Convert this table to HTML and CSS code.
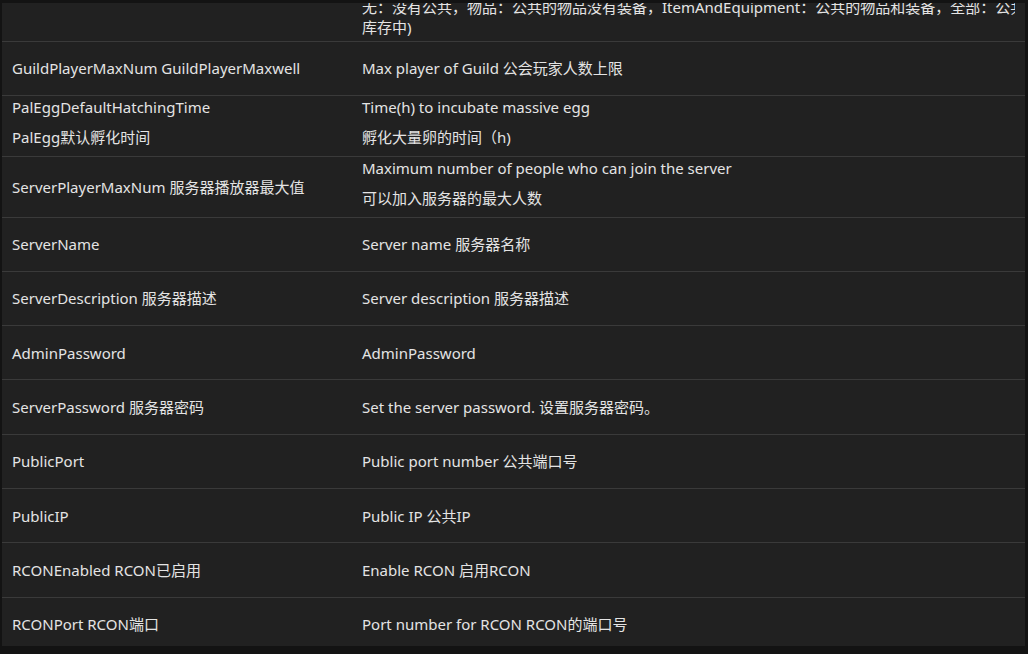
FILE: index.html
```html
<!DOCTYPE html>
<html lang="zh-CN">
<head>
  <meta charset="UTF-8" />
  <meta name="viewport" content="width=device-width, initial-scale=1.0" />
  <title>Palworld 服务器设置</title>
  <link rel="stylesheet" href="styles.css">
</head>
<body>
  <div class="viewport">
    <table class="settings">
      <colgroup>
        <col class="col-key" />
        <col class="col-desc" />
      </colgroup>
      <tbody>
        <tr class="row-cut">
          <td></td>
          <td>
            <div class="wrap-line">无：没有公共，物品：公共的物品没有装备，ItemAndEquipment：公共的物品和装备，全部：公共所有</div>
            <div class="wrap-line">库存中)</div>
          </td>
        </tr>
        <tr class="row-first">
          <td>GuildPlayerMaxNum GuildPlayerMaxwell</td>
          <td>Max player of Guild 公会玩家人数上限</td>
        </tr>
        <tr class="row-double">
          <td class="stack">
            <div class="line">PalEggDefaultHatchingTime</div>
            <div class="line">PalEgg默认孵化时间</div>
          </td>
          <td class="stack">
            <div class="line">Time(h) to incubate massive egg</div>
            <div class="line">孵化大量卵的时间（h)</div>
          </td>
        </tr>
        <tr class="row-double">
          <td>ServerPlayerMaxNum 服务器播放器最大值</td>
          <td class="stack">
            <div class="line">Maximum number of people who can join the server</div>
            <div class="line">可以加入服务器的最大人数</div>
          </td>
        </tr>
        <tr>
          <td>ServerName</td>
          <td>Server name 服务器名称</td>
        </tr>
        <tr>
          <td>ServerDescription 服务器描述</td>
          <td>Server description 服务器描述</td>
        </tr>
        <tr>
          <td>AdminPassword</td>
          <td>AdminPassword</td>
        </tr>
        <tr>
          <td>ServerPassword 服务器密码</td>
          <td>Set the server password. 设置服务器密码。</td>
        </tr>
        <tr>
          <td>PublicPort</td>
          <td>Public port number 公共端口号</td>
        </tr>
        <tr>
          <td>PublicIP</td>
          <td>Public IP 公共IP</td>
        </tr>
        <tr>
          <td>RCONEnabled RCON已启用</td>
          <td>Enable RCON 启用RCON</td>
        </tr>
        <tr>
          <td>RCONPort RCON端口</td>
          <td>Port number for RCON RCON的端口号</td>
        </tr>
      </tbody>
    </table>
  </div>
</body>
</html>
```

FILE: styles.css
```css
:root {
  --page-bg: #131313;
  --table-bg: #212121;
  --row-line: #3a3a3a;
  --text: #e4e4e4;
}

* {
  box-sizing: border-box;
}

body {
  margin: 0;
  background: var(--page-bg);
  font-family: "Noto Sans", "Noto Sans CJK SC", sans-serif;
  font-size: 15px;
  color: var(--text);
}

.viewport {
  margin: 3px 3px 0 2px;
  height: 643px;
  overflow: hidden;
  background: var(--table-bg);
}

.settings {
  width: 100%;
  border-collapse: collapse;
  table-layout: fixed;
  margin-top: -30px;
}

.col-key { width: 350px; }

.settings td {
  height: 54.3px;
  padding: 0 10px;
  vertical-align: middle;
  border-bottom: 1px solid var(--row-line);
  line-height: 22px;
  white-space: nowrap;
  overflow: hidden;
}

/* wrapped paragraph, top line runs off the window */
.row-cut td {
  height: 68px;
  padding-bottom: 4px;
  vertical-align: bottom;
}
.wrap-line { line-height: 20px; overflow: hidden; }

.row-first td { height: 54px; }

.row-double td { height: 61px; }
.settings td.stack { vertical-align: top; }
.stack .line { line-height: 30px; }
.stack .line:first-child { margin-top: -4px; }
```
